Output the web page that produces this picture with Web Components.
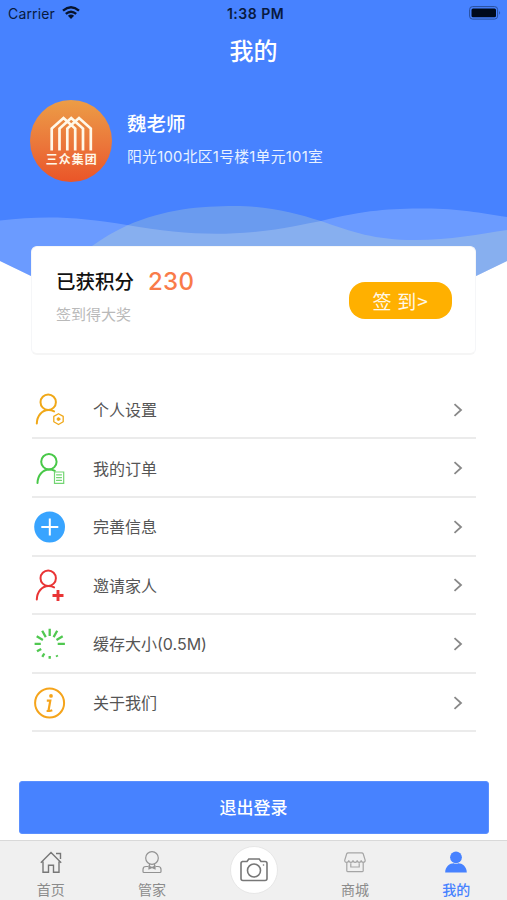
<!DOCTYPE html>
<html lang="zh-CN">
<head>
<meta charset="utf-8">
<title>我的</title>
<style>
html,body{margin:0;padding:0;background:#fff}
body{width:507px;height:900px;overflow:hidden;font-family:Inter,"Noto Sans CJK SC",sans-serif}
</style>
</head>
<body>
<profile-page></profile-page>
<script>
const define = (name, html) => customElements.define(name, class extends HTMLElement {
  constructor() {
    super();
    const t = document.createElement('template');
    t.innerHTML = html;
    this.attachShadow({mode: 'open'}).append(t.content.cloneNode(true));
  }
});

const person = '<circle cx="14.200" cy="8.200" r="7.700"/><path d="M2.800 29.500C3 22 7.800 16.200 14.500 16.100c2.200 0 4 .5 5.600 1.300"/>';
const icons = {
  settings: `<g fill="none" stroke="#f0a818" stroke-width="2" stroke-linecap="round">${person}<path stroke-width="1.300" stroke-linejoin="round" d="M24.500 19.700l4.700 2.700v5.400l-4.700 2.700-4.700-2.700v-5.400z"/><circle cx="24.500" cy="25.100" r="1.400" fill="#f0a818" stroke-width="1"/></g>`,
  order: `<g fill="none" stroke="#48c848" stroke-width="2" stroke-linecap="round"><g transform="translate(.7 .5)">${person}</g><g stroke="#73d573" stroke-width="1.200"><path fill="#fff" d="M20.500 19h9.200v11.300h-9.200z"/><path d="M22.500 21.800h5M22.500 24.600h5M22.500 27.400h5"/></g></g>`,
  plus: '<circle cx="15.600" cy="16" r="15.400" fill="#38a4ff"/><path d="M15.800 7.500v17M7.300 16h17" fill="none" stroke="#fff" stroke-width="2"/>',
  invite: `<g fill="none" stroke="#e93435" stroke-width="2" stroke-linecap="round">${person}<path stroke-width="2.900" stroke-linecap="butt" d="M24 20v11M18.500 25.500h11"/></g>`,
  cache: '<g stroke="#50c850" fill="none" stroke-linecap="butt"><path stroke-width="2.300" d="M15.700 .8v7.200M23.200 2.800l-3.600 6.300M28.700 8.300l-6.200 3.600M30.900 15.900h-7.200M8.200 2.800l3.600 6.300M2.700 8.300l6.200 3.600M.6 15.900h6.200M3 23.300l4.200-2.400M8.300 28.900l2-3.400M15.700 30.700v-2.600M22.500 27.200l.9 1.600"/></g>',
  about: '<circle cx="15.600" cy="16" r="14.500" fill="none" stroke="#f5a41b" stroke-width="2"/><circle cx="17" cy="8.900" r="1.900" fill="#f5a41b"/><path d="M12.800 13.700h3.500l-1.700 9.300c-.2 1.200 1.500 1 3.700.3M12.600 24h4" fill="none" stroke="#f5a41b" stroke-width="2.200"/>'
};

define('status-bar', `<style>
:host{display:grid;grid-template-columns:1fr auto 1fr;align-items:center;box-sizing:border-box;height:28px;padding:0 6px 1px 8px;color:#081a40;font-size:14px;position:relative}
.l{display:flex;align-items:center;gap:7px;letter-spacing:.15px}.t{font-weight:600;font-size:14px;letter-spacing:.5px;margin-left:2px}.r{justify-self:end;margin-top:-1px}svg{display:block}
.l svg{margin-top:-2px}
</style><div class="l"><span>Carrier</span><svg width="18" height="13" viewBox="0 0 18 13"><g fill="none" stroke="#07132d" stroke-width="2.400"><path d="M1 4.700Q9-2 17 4.700M3.800 7.900Q9 3.500 14.200 7.900"/></g><path fill="#07132d" d="M5.900 9.800Q9 7.400 12.100 9.800L9 13z"/></svg></div>
<span class="t">1:38 PM</span>
<svg class="r" width="32" height="14" viewBox="0 0 32 14"><rect x=".6" y=".6" width="28" height="12.500" rx="3" fill="none" stroke="#294f9b"/><rect x="2.500" y="2.500" width="24.500" height="8.800" rx="1.500" fill="#000a1c"/><path d="M30.200 4.800q1.800 2 0 4z" fill="#294f9b"/></svg>`);

define('wave-backdrop', `<style>:host{display:block;position:absolute;inset:0 0 auto 0;height:300px}svg{display:block}</style>
<svg width="507" height="300" viewBox="0 0 507 300"><defs><clipPath id="c"><path d="M0 0H507V261L476 276 420 300H87L31 276 0 261z"/></clipPath></defs>
<g clip-path="url(#c)"><path fill="#4782ff" d="M0 0h507v300H0z"/>
<path fill="#fff" fill-opacity=".2" d="M0 220.500C45 215 80 217 127 225S210 236 254 232C285 229 304 224 321 221C365 210 390 208.500 425 208.500S480 213 507 217V300H0z"/>
<path fill="#fbffaf" fill-opacity=".2" d="M92 246C103 238 115 231 127 225.500C165 209 200 206 235 206C270 206 295 213 321 221C352 232 375 240 415 240C450 240 480 234 507 230V300H60z"/></g></svg>`);

define('group-logo', `<style>:host{display:block;width:82px;height:82px}svg{display:block}text{font:700 12px "Noto Sans CJK SC",sans-serif}</style>
<svg width="82" height="82" viewBox="0 0 82 82"><defs><linearGradient id="g" x2="0" y2="1"><stop offset="0" stop-color="#ec9d46"/><stop offset=".55" stop-color="#eb763a"/><stop offset="1" stop-color="#ea5528"/></linearGradient></defs><circle cx="41" cy="41" r="41" fill="url(#g)"/>
<g fill="none" stroke="#fff8e8" stroke-width="2.700" stroke-linejoin="miter"><path d="M21.700 50.500V28.500L33.500 18 45.200 28.500V50.500M29.500 50.500V28.500L41.200 18 53 28.500V50.500M37.300 50.500V28.500L49 18 60.800 28.500V50.500"/></g>
<text x="15.700" y="64" textLength="51" fill="#fff8e8">三众集团</text></svg>`);

define('profile-header', `<style>
:host{display:block;height:218px;position:relative;color:#fff}
h1{margin:0;height:47px;font-size:24px;font-weight:500;line-height:48px;text-align:center}
.p{display:flex;align-items:center;gap:15px;padding:25px 30px 0}
.n{font-size:19.500px;line-height:28px;font-weight:500}.a{font-size:14.800px;letter-spacing:.28px;line-height:22px;margin-top:8px;color:#e9f2ff;white-space:nowrap}
.x{padding-bottom:4px}
</style><h1>我的</h1><div class="p"><group-logo></group-logo><div class="x"><div class="n"><slot name="name"></slot></div><div class="a"><slot name="address"></slot></div></div></div>`);

define('points-card', `<style>
:host{display:flex;position:relative;box-sizing:border-box;justify-content:space-between;align-items:flex-start;width:445px;height:109px;margin-left:31px;padding:18px 23px 0 24px;background:#fff;border:1px solid #f5f6f8;border-bottom:2px solid #f5f5f5;border-radius:6px}
.h{display:flex;align-items:center;height:32px;gap:14px;font-size:19.500px;font-weight:500;color:#111}.h span{margin-top:-1px}.h b{font-size:24px;font-weight:500;color:#f97b49;letter-spacing:.3px}
.s{font-size:15px;line-height:22px;margin-top:7px;color:#b9b9b9}
button{margin:17px 0 0;border:0;width:103px;height:37px;border-radius:16px;background:#ffb000;color:#fff8e8;font:400 19px "Noto Sans CJK SC",sans-serif;letter-spacing:.8px;padding:0;line-height:34px}
</style><div><div class="h"><span>已获积分</span><b>230</b></div><div class="s">签到得大奖</div></div><button>签 到&gt;</button>`);

customElements.define('menu-row', class extends HTMLElement {
  constructor() {
    super();
    this.attachShadow({mode: 'open'}).innerHTML = `<style>
:host{display:flex;align-items:center;box-sizing:border-box;height:58.600px;border-bottom:2px solid #ebebeb;color:#555;font-size:16px}
.i{width:32px;height:32px;margin:2px 27px 0 2px;flex:none;overflow:visible}.l{flex:1}.c{margin:1px 12px 0 0}
</style><svg class="i" viewBox="0 0 32 32">${icons[this.getAttribute('icon')]}</svg><span class="l"><slot></slot></span><svg class="c" width="12" height="14" viewBox="0 0 12 14"><path d="M2.500 1.200 9 7l-6.500 5.800" fill="none" stroke="#888" stroke-width="1.800"/></svg>`;
  }
});

define('logout-button', `<style>:host{display:block;margin:48.600px 18px 0 19px}button{display:block;width:470px;height:53px;border:1px solid #5b90ff;border-radius:3px;background:#4782ff;color:#fff;font:500 17px "Noto Sans CJK SC",sans-serif;padding:0 1px 1px 0}</style><button><slot></slot></button>`);

define('tab-item', `<style>:host{display:flex;flex-direction:column;align-items:center;flex:1;color:#8b8b8b;font-size:14px;line-height:20px;font-weight:400}:host([active]){color:#4782ff;font-weight:500}::slotted(svg){display:block;width:26px;height:26px;margin:8px 0 5px}</style><slot name="icon"></slot><span><slot></slot></span>`);

define('camera-tab', `<style>:host{display:flex;flex:1;justify-content:center;align-items:flex-start}div{box-sizing:border-box;width:48px;height:48px;margin-top:5px;border-radius:50%;background:#fff;border:1px solid #e7e7e7;display:grid;place-items:center}</style>
<div><svg width="30" height="26" viewBox="0 0 30 26" fill="none" stroke="#777" stroke-width="1.600"><path d="M3 4.500h5l1.800-2.500h10.400L22 4.500h4q2 0 2 2v15q0 2-2 2H4q-2 0-2-2v-15q0-2 2-2"/><circle cx="15" cy="13.500" r="6.500"/><circle cx="24.500" cy="8" r=".8" fill="#777" stroke="none"/></svg></div>`);

define('tab-bar', `<style>:host{display:flex;box-sizing:border-box;height:60px;margin-top:6px;background:#f0f0f0;border-top:1px solid #d9d9d9}</style>
<tab-item><svg slot="icon" viewBox="0 0 26 26" fill="none" stroke="#777" stroke-width="1.400"><path d="M2.800 13.800 13 3.500l10.200 10.300M18 4.500h4.500v5.500M5 12.500v10.800h5.500v-7h5v7H21V12.500"/></svg>首页</tab-item>
<tab-item><svg slot="icon" viewBox="0 0 26 26" fill="none" stroke="#929292" stroke-width="1.200"><circle cx="13" cy="9" r="6.300"/><path d="M10.500 14.800v3M15.500 14.800v3M9.300 17.500H7q-3 0-3 3v2q0 1 1 1h16q1 0 1-1v-2q0-3-3-3h-2.300"/><path d="M10 17.200 13 18.500l3-1.300v2.600L13 18.500l-3 1.300z" fill="#929292"/></svg>管家</tab-item>
<camera-tab></camera-tab>
<tab-item><svg slot="icon" viewBox="0 0 26 26" fill="none" stroke="#a5a5a5" stroke-width="1.200"><path d="M6.500 3.800h13q1.300 0 1.700 1l2 6.500q0 2-2 2t-2-2q0 2-2 2t-2-2q0 2-2.100 2t-2.100-2q0 2-2.100 2t-2.100-2q0 2-2.100 2t-2-2l2-6.500q.4-1 1.700-1zM4.800 13.200v8.600q0 .8.800.8h14.800q.8 0 .8-.8v-8.600M8.800 14.300V18h8.400v-3.700"/></svg>商城</tab-item>
<tab-item active><svg slot="icon" viewBox="0 0 26 26" fill="#4782ff"><circle cx="13" cy="8.300" r="5.900"/><path d="M2.200 23.400c0-6 4.800-9.200 8.500-9.200q2.300 1 4.600 0c3.700 0 8.500 3.200 8.500 9.200z"/></svg>我的</tab-item>`);

define('profile-page', `<style>:host{display:block;position:relative;width:507px;height:900px;background:#fff;overflow:hidden}nav{display:block;width:444px;margin:25.800px 0 0 32px}</style>
<wave-backdrop></wave-backdrop><status-bar></status-bar>
<profile-header><span slot="name">魏老师</span><span slot="address">阳光100北区1号楼1单元101室</span></profile-header>
<points-card></points-card>
<nav><menu-row icon="settings">个人设置</menu-row><menu-row icon="order">我的订单</menu-row><menu-row icon="plus">完善信息</menu-row><menu-row icon="invite">邀请家人</menu-row><menu-row icon="cache">缓存大小(0.5M)</menu-row><menu-row icon="about">关于我们</menu-row></nav>
<logout-button>退出登录</logout-button><tab-bar></tab-bar>`);
</script>
</body>
</html>
